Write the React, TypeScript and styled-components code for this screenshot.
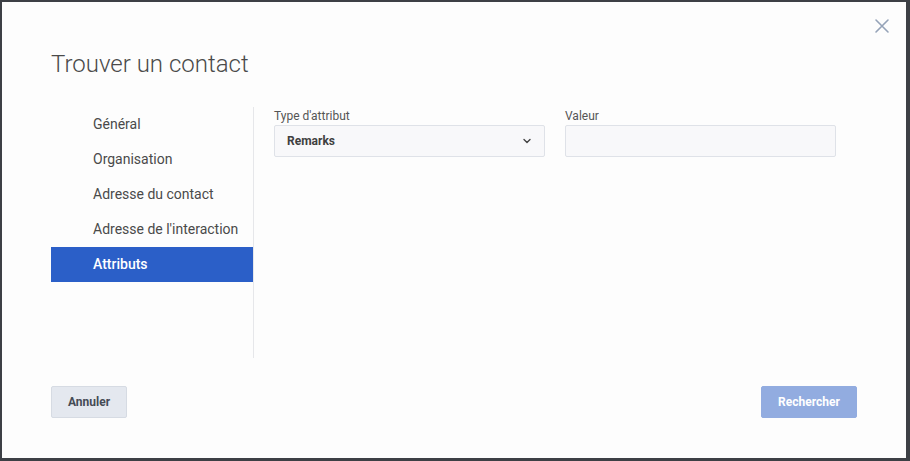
import React, { useState } from 'react';
import styled, { createGlobalStyle } from 'styled-components';

const GlobalStyle = createGlobalStyle`
  html, body {
    margin: 0;
    padding: 0;
    background: #3d4045;
  }
  body {
    font-family: Roboto, "Liberation Sans", sans-serif;
  }
`;

const sections = ['Général', 'Organisation', 'Adresse du contact', "Adresse de l'interaction", 'Attributs'];

function ChevronDown() {
  return (
    <svg width="10" height="10" viewBox="0 0 10 10" fill="none">
      <path d="M2 3.5 L5 6.5 L8 3.5" stroke="#444" strokeWidth="1.4" strokeLinecap="round" strokeLinejoin="round" />
    </svg>
  );
}

function CloseIcon() {
  return (
    <svg width="16" height="16" viewBox="0 0 16 16" fill="none">
      <path d="M2 2 L14 14 M14 2 L2 14" stroke="#95a3b8" strokeWidth="1.6" strokeLinecap="round" />
    </svg>
  );
}

export default function App() {
  const [active, setActive] = useState(4);
  const [value, setValue] = useState('');

  return (
    <>
      <GlobalStyle />
      <Frame>
        <Dialog>
          <CloseButton aria-label="Fermer">
            <CloseIcon />
          </CloseButton>
          <Title>Trouver un contact</Title>
          <Body>
            <Nav>
              {sections.map((s, i) => (
                <NavItem key={s} $active={i === active} onClick={() => setActive(i)}>
                  {s}
                </NavItem>
              ))}
            </Nav>
            <Fields>
              <Field>
                <Label>Type d'attribut</Label>
                <SelectBox>
                  <span>Remarks</span>
                  <ChevronDown />
                </SelectBox>
              </Field>
              <Field>
                <Label>Valeur</Label>
                <Input value={value} onChange={e => setValue(e.target.value)} />
              </Field>
            </Fields>
          </Body>
          <Footer>
            <Button>Annuler</Button>
            <Button $primary>Rechercher</Button>
          </Footer>
        </Dialog>
      </Frame>
    </>
  );
}

const Frame = styled.div`
  width: 910px;
  height: 461px;
  box-sizing: border-box;
  padding: 2px 4px 3px 2px;
  background: #3d4045;
`;

const Dialog = styled.div`
  position: relative;
  height: 100%;
  box-sizing: border-box;
  background: #fdfdfd;
  padding: 44px 49px 0 49px;
  display: flex;
  flex-direction: column;
`;

const CloseButton = styled.button`
  position: absolute;
  top: 13px;
  right: 13px;
  width: 22px;
  height: 22px;
  padding: 0;
  border: none;
  background: transparent;
  display: flex;
  align-items: center;
  justify-content: center;
  cursor: pointer;
`;

const Title = styled.h1`
  margin: 0;
  font-size: 24px;
  font-weight: 300;
  color: #4a4a4a;
  line-height: 36px;
`;

const Body = styled.div`
  display: flex;
  margin-top: 25px;
  height: 251px;
`;

const Nav = styled.div`
  width: 202px;
  border-right: 1px solid #e6e7ea;
  display: flex;
  flex-direction: column;
`;

const NavItem = styled.div<{ $active?: boolean }>`
  height: 35px;
  line-height: 35px;
  padding-left: 42px;
  font-size: 14px;
  color: ${p => (p.$active ? '#ffffff' : '#4a4a4a')};
  background: ${p => (p.$active ? '#2b5fc8' : 'transparent')};
  font-weight: ${p => (p.$active ? 500 : 400)};
  cursor: pointer;
`;

const Fields = styled.div`
  display: flex;
  gap: 20px;
  padding-left: 20px;
`;

const Field = styled.div`
  width: 271px;
  display: flex;
  flex-direction: column;
`;

const Label = styled.label`
  font-size: 12px;
  color: #555;
  line-height: 16px;
  height: 16px;
  margin-top: 1px;
  margin-bottom: 1px;
`;

const SelectBox = styled.div`
  height: 32px;
  box-sizing: border-box;
  border: 1px solid #dfe2e8;
  border-radius: 2px;
  background: #f8f8fa;
  display: flex;
  align-items: center;
  justify-content: space-between;
  padding: 0 12px;
  font-size: 12px;
  font-weight: 700;
  color: #3f3f3f;
  cursor: pointer;
`;

const Input = styled.input`
  height: 32px;
  box-sizing: border-box;
  border: 1px solid #dfe2e8;
  border-radius: 2px;
  background: #f8f8fa;
  outline: none;
  padding: 0 12px;
  font-family: inherit;
  font-size: 12px;
`;

const Footer = styled.div`
  display: flex;
  justify-content: space-between;
  margin-top: 28px;
`;

const Button = styled.button<{ $primary?: boolean }>`
  height: 32px;
  padding: 0 ${p => (p.$primary ? '16px' : '16px')};
  min-width: ${p => (p.$primary ? '96px' : '76px')};
  border-radius: 2px;
  font-family: inherit;
  font-size: 12px;
  font-weight: 700;
  cursor: pointer;
  color: ${p => (p.$primary ? '#ffffff' : '#444b55')};
  background: ${p => (p.$primary ? '#92ace0' : '#e4e8ef')};
  border: 1px solid ${p => (p.$primary ? '#92ace0' : '#d6dbe3')};
`;
